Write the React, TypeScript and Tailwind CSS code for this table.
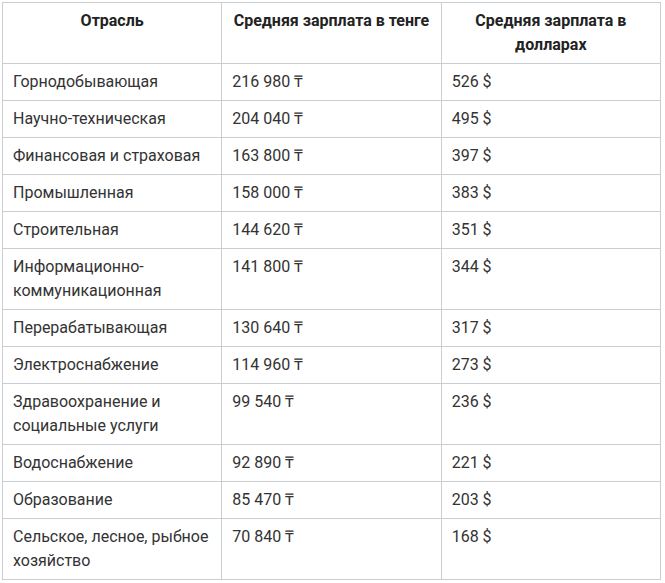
import React from 'react';

const ROWS: [string, string, string][] = [
  ['Горнодобывающая', '216 980 ₸', '526 $'],
  ['Научно-техническая', '204 040 ₸', '495 $'],
  ['Финансовая и страховая', '163 800 ₸', '397 $'],
  ['Промышленная', '158 000 ₸', '383 $'],
  ['Строительная', '144 620 ₸', '351 $'],
  ['Информационно-коммуникационная', '141 800 ₸', '344 $'],
  ['Перерабатывающая', '130 640 ₸', '317 $'],
  ['Электроснабжение', '114 960 ₸', '273 $'],
  ['Здравоохранение и социальные услуги', '99 540 ₸', '236 $'],
  ['Водоснабжение', '92 890 ₸', '221 $'],
  ['Образование', '85 470 ₸', '203 $'],
  ['Сельское, лесное, рыбное хозяйство', '70 840 ₸', '168 $'],
];

const cell = 'border border-[#c9ced2] px-[10px] py-[6px] align-top';

export default function App() {
  return (
    <div className="bg-white p-[2px] font-['Roboto',sans-serif] text-[16px] leading-[24px] text-[#333]">
      <table className="w-[659px] table-fixed border-collapse">
        <thead>
          <tr>
            <th className={`${cell} text-center font-bold text-[#222]`}>Отрасль</th>
            <th className={`${cell} text-center font-bold text-[#222]`}>Средняя зарплата в тенге</th>
            <th className={`${cell} text-center font-bold text-[#222]`}>Средняя зарплата в долларах</th>
          </tr>
        </thead>
        <tbody>
          {ROWS.map(([name, kzt, usd]) => (
            <tr key={name}>
              <td className={cell}>{name}</td>
              <td className={cell}>{kzt}</td>
              <td className={cell}>{usd}</td>
            </tr>
          ))}
        </tbody>
      </table>
    </div>
  );
}
